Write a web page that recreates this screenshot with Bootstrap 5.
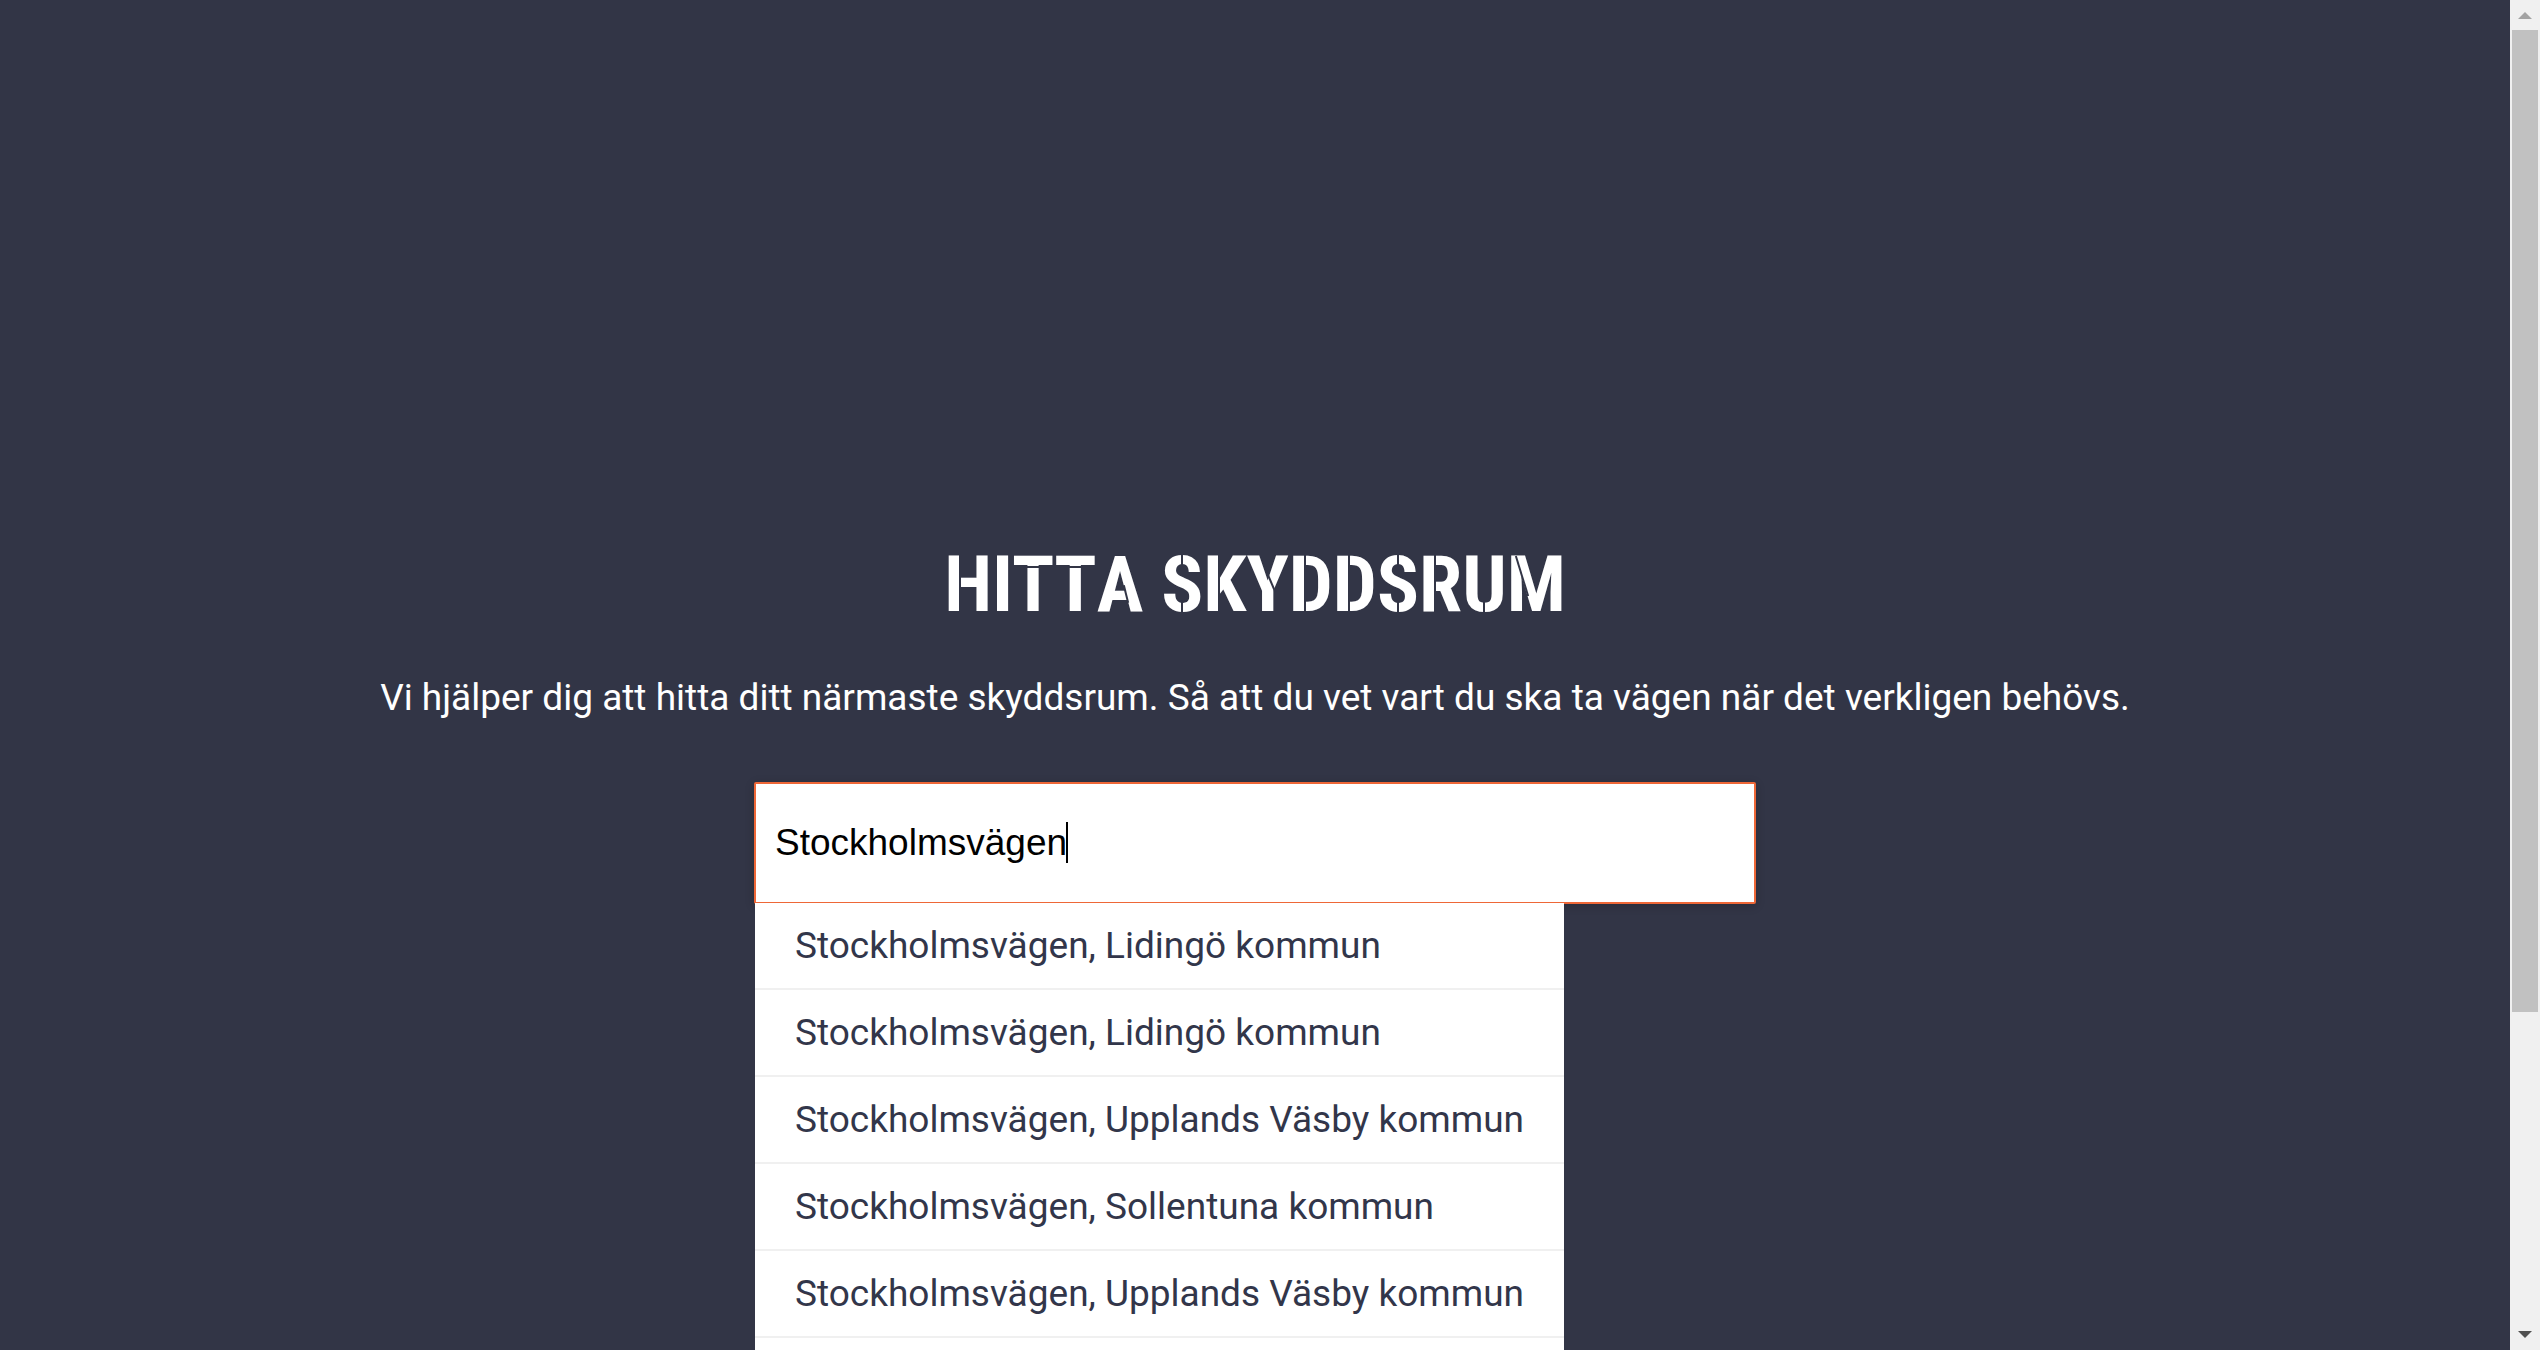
<!DOCTYPE html>
<html lang="sv">
<head>
<meta charset="utf-8">
<meta name="viewport" content="width=device-width, initial-scale=1">
<title>Hitta skyddsrum</title>
<link rel="stylesheet" href="https://cdn.jsdelivr.net/npm/bootstrap@5.3.0/dist/css/bootstrap.min.css">
<style>
:root { --ink: #323546; --accent: #ee6737; }
body { background: var(--ink); font-family: Roboto, "Liberation Sans", sans-serif; font-size: 37px; line-height: 54px; }
.hero { padding-top: 546px; }
.stencil { font-family: "Roboto Condensed", Roboto, sans-serif; font-size: 78px; line-height: 78px; font-weight: 700; margin-bottom: 47px; }
.intro { margin-bottom: 57px; }
/* stencil bridges: thin background-coloured strips laid over the letters */
.stencil span { position: relative; }
.stencil span::after { content: ""; position: absolute; left: 0; top: 16px; width: 100%; height: 58px; }
.stencil .cut-stem::after { left: 15px; width: 2px; background: var(--ink); }
.stencil .cut-bar::after { top: 27px; height: 2px; background: var(--ink); }
.stencil .cut-ends::after { left: 50%; margin-left: -1px; width: 2px; background: linear-gradient(var(--ink) 12px, transparent 12px 46px, var(--ink) 46px); }
.stencil .cut-foot::after { left: 50%; margin-left: -1px; top: 58px; width: 2px; height: 16px; background: var(--ink); }
.stencil .cut-slant::after { left: 14px; top: 16px; width: 2px; height: 42px; background: var(--ink); transform: rotate(-17deg); }
.stencil .cut-arm::after { left: 24px; top: 32px; width: 2px; height: 22px; background: var(--ink); transform: rotate(-23deg); }
.stencil .cut-leg::after { left: 28px; top: 46px; width: 2px; height: 18px; background: var(--ink); transform: rotate(-14deg); }
.finder { max-width: 1002px; }
.finder .form-control { height: 122px; padding: 0 19px; border: 2px solid var(--accent); border-radius: 2px; font-family: "Liberation Sans", Arial, sans-serif; font-size: 37px; color: #000; background: #fff; box-shadow: 0 2px 10px rgba(0,0,0,.2); caret-color: transparent; }
.text-cursor { left: 312px; top: 40px; width: 2px; height: 41px; background: #000; }
.suggestions { left: 1px; top: 121px; --bs-list-group-border-radius: 0; }
.suggestions .list-group-item { padding: 16px 40px 15px; border: 0; border-bottom: 2px solid #f0f0f0; color: #32364a; background: #fff; white-space: nowrap; min-height: 87px; }
.scroll-rail { width: 30px; background: #f0f0f0; }
.scroll-rail svg { display: block; width: 30px; height: 30px; }
.scroll-thumb { height: 982px; margin: 0 2px; background: #c1c1c1; }
</style>
<script src="https://cdn.jsdelivr.net/npm/bootstrap@5.3.0/dist/js/bootstrap.bundle.min.js"></script>
</head>
<body>
<div class="d-flex vh-100 overflow-hidden">
  <main class="hero flex-grow-1 text-center text-white overflow-hidden">
    <h1 class="stencil"><span class="cut-stem">H</span>I<span class="cut-bar">T</span><span class="cut-bar">T</span><span class="cut-leg">A</span> <span class="cut-ends">S</span><span class="cut-stem">K</span><span class="cut-arm">Y</span><span class="cut-stem">D</span><span class="cut-stem">D</span><span class="cut-ends">S</span><span class="cut-stem">R</span><span class="cut-foot">U</span><span class="cut-slant">M</span></h1>
    <p class="intro">Vi hjälper dig att hitta ditt närmaste skyddsrum. Så att du vet vart du ska ta vägen när det verkligen behövs.</p>
    <form class="finder position-relative mx-auto text-start">
      <label class="visually-hidden" for="address">Adress</label>
      <input class="form-control" id="address" type="text" value="Stockholmsvägen" autocomplete="off">
      <span class="text-cursor position-absolute"></span>
      <div class="suggestions list-group position-absolute">
        <a href="#" class="list-group-item">Stockholmsvägen, Lidingö kommun</a>
        <a href="#" class="list-group-item">Stockholmsvägen, Lidingö kommun</a>
        <a href="#" class="list-group-item">Stockholmsvägen, Upplands Väsby kommun</a>
        <a href="#" class="list-group-item">Stockholmsvägen, Sollentuna kommun</a>
        <a href="#" class="list-group-item">Stockholmsvägen, Upplands Väsby kommun</a>
        <div class="list-group-item"></div>
      </div>
    </form>
  </main>
  <div class="scroll-rail d-flex flex-column flex-shrink-0" aria-hidden="true">
    <svg viewBox="0 0 30 30"><path d="M8 19h14l-7-7z" fill="#a3a3a3"/></svg>
    <div class="flex-grow-1"><div class="scroll-thumb"></div></div>
    <svg viewBox="0 0 30 30"><path d="M8 11h14l-7 7z" fill="#505050"/></svg>
  </div>
</div>
</body>
</html>
